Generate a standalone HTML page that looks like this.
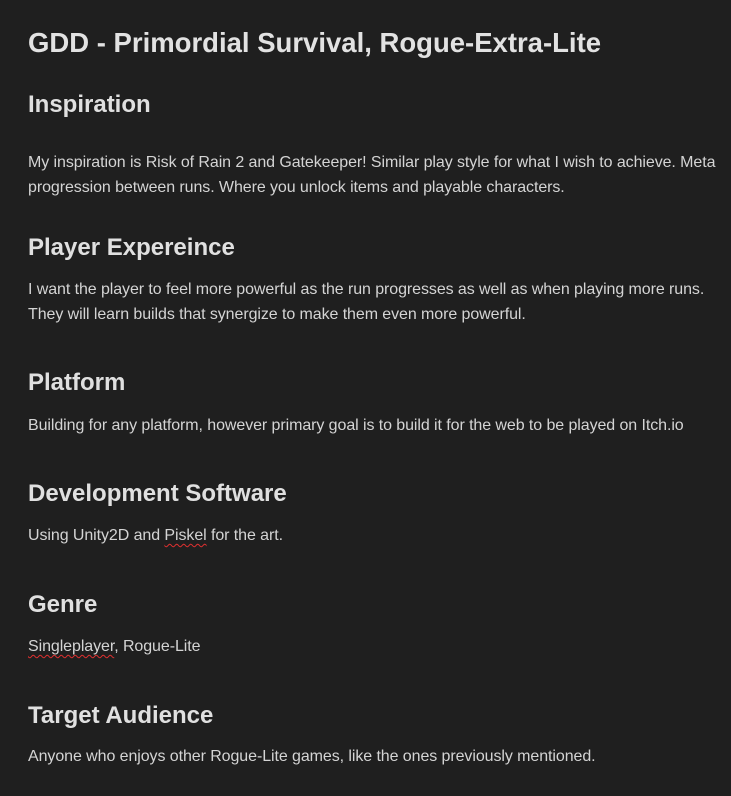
<!DOCTYPE html>
<html><head><meta charset="utf-8"><style>
html,body{margin:0;padding:0;background:#1f1f1f;width:731px;height:796px;overflow:hidden}
body{font-family:"Liberation Sans","DejaVu Sans",sans-serif;color:#d4d4d4}
.l{position:absolute;left:28px;white-space:nowrap}
.t{font-size:27.5px;font-weight:bold;color:#e2e2e2;line-height:30px}
.h{font-size:24px;font-weight:bold;color:#e0e0e0;line-height:30px}
.p{font-size:16px;line-height:25px;letter-spacing:-0.08px}
.sq{text-decoration:underline wavy #e03030;text-decoration-thickness:1px;text-underline-offset:3px}
</style></head><body>
<div class="l t" style="top:28px">GDD - Primordial Survival, Rogue-Extra-Lite</div>
<div class="l h" style="top:90px">Inspiration</div>
<div class="l p" style="top:150px">My inspiration is Risk of Rain 2 and Gatekeeper! Similar play style for what I wish to achieve. Meta<br>progression between runs. Where you unlock items and playable characters.</div>
<div class="l h" style="top:233px">Player Expereince</div>
<div class="l p" style="top:277px">I want the player to feel more powerful as the run progresses as well as when playing more runs.<br>They will learn builds that synergize to make them even more powerful.</div>
<div class="l h" style="top:368px">Platform</div>
<div class="l p" style="top:413px">Building for any platform, however primary goal is to build it for the web to be played on Itch.io</div>
<div class="l h" style="top:479px">Development Software</div>
<div class="l p" style="top:523px">Using Unity2D and <span class="sq">Piskel</span> for the art.</div>
<div class="l h" style="top:590px">Genre</div>
<div class="l p" style="top:634px"><span class="sq">Singleplayer</span>, Rogue-Lite</div>
<div class="l h" style="top:701px">Target Audience</div>
<div class="l p" style="top:744px">Anyone who enjoys other Rogue-Lite games, like the ones previously mentioned.</div>
</body></html>
